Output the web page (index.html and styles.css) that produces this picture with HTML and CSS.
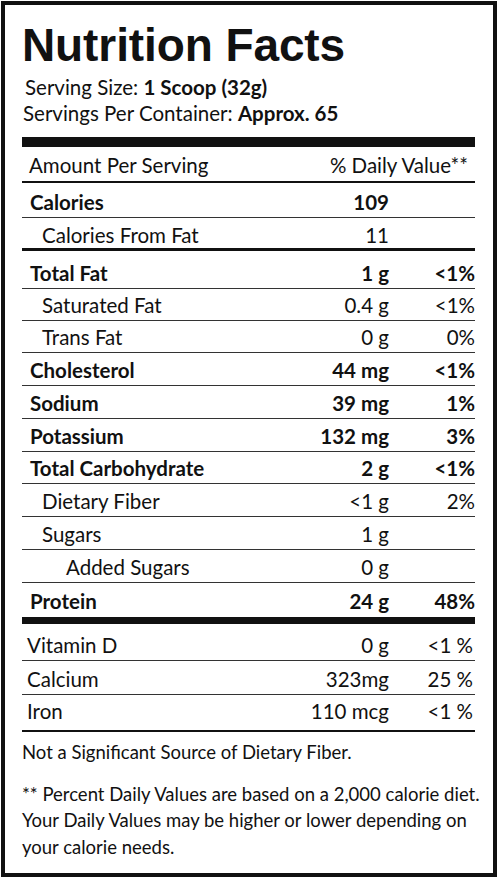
FILE: index.html
```html
<!DOCTYPE html>
<html lang="en">
<head>
    <meta charset="UTF-8">
    <meta name="viewport" content="width=device-width, initial-scale=1.0">
    <title>Nutrition Facts</title>
    <link rel="stylesheet" href="styles.css">
</head>
<body>
    <div class="label">
        <h1 class="title">Nutrition Facts</h1>
        <p class="serving">Serving Size: <b>1 Scoop (32g)</b></p>
        <p class="serving serving-2">Servings Per Container: <b>Approx. 65</b></p>

        <div class="bar"></div>

        <div class="row head">
            <span class="name">Amount Per Serving</span>
            <span class="dv">% Daily Value**</span>
        </div>
        <div class="row cal strong">
            <span class="name">Calories</span>
            <span class="amt">109</span>
            <span class="pct"></span>
        </div>
        <div class="row thick">
            <span class="name indent">Calories From Fat</span>
            <span class="amt">11</span>
            <span class="pct"></span>
        </div>
        <div class="row fat strong">
            <span class="name">Total Fat</span>
            <span class="amt">1 g</span>
            <span class="pct">&lt;1%</span>
        </div>
        <div class="row short">
            <span class="name indent">Saturated Fat</span>
            <span class="amt">0.4 g</span>
            <span class="pct">&lt;1%</span>
        </div>
        <div class="row short">
            <span class="name indent">Trans Fat</span>
            <span class="amt">0 g</span>
            <span class="pct">0%</span>
        </div>
        <div class="row strong">
            <span class="name">Cholesterol</span>
            <span class="amt">44 mg</span>
            <span class="pct">&lt;1%</span>
        </div>
        <div class="row strong">
            <span class="name">Sodium</span>
            <span class="amt">39 mg</span>
            <span class="pct">1%</span>
        </div>
        <div class="row strong">
            <span class="name">Potassium</span>
            <span class="amt">132 mg</span>
            <span class="pct">3%</span>
        </div>
        <div class="row short strong">
            <span class="name">Total Carbohydrate</span>
            <span class="amt">2 g</span>
            <span class="pct">&lt;1%</span>
        </div>
        <div class="row">
            <span class="name indent">Dietary Fiber</span>
            <span class="amt">&lt;1 g</span>
            <span class="pct">2%</span>
        </div>
        <div class="row">
            <span class="name indent">Sugars</span>
            <span class="amt">1 g</span>
            <span class="pct"></span>
        </div>
        <div class="row">
            <span class="name indent-2">Added Sugars</span>
            <span class="amt">0 g</span>
            <span class="pct"></span>
        </div>
        <div class="row last strong">
            <span class="name">Protein</span>
            <span class="amt">24 g</span>
            <span class="pct">48%</span>
        </div>

        <div class="bar bar-small"></div>

        <div class="row vit">
            <span class="name">Vitamin D</span>
            <span class="amt">0 g</span>
            <span class="pct">&lt;1 %</span>
        </div>
        <div class="row vit calcium">
            <span class="name">Calcium</span>
            <span class="amt">323mg</span>
            <span class="pct">25 %</span>
        </div>
        <div class="row vit iron">
            <span class="name">Iron</span>
            <span class="amt">110 mcg</span>
            <span class="pct">&lt;1 %</span>
        </div>

        <p class="note">Not a Significant Source of Dietary Fiber.</p>
        <p class="note note-2">** Percent Daily Values are based on a 2,000 calorie diet.<br>Your Daily Values may be higher or lower depending on<br>your calorie needs.</p>
    </div>
</body>
</html>
```

FILE: styles.css
```css
* {
    box-sizing: border-box;
    margin: 0;
    padding: 0;
}

body {
    font-family: Lato, 'Open Sans', sans-serif;
    font-size: 20.5px;
    color: #111;
    background-color: #fff;
}

.label {
    margin: 1px;
    width: 496px;
    height: 876px;
    border: 4px solid #111;
    padding: 17px 18px 0 17px;
}

.title {
    font-family: 'Liberation Sans', Arial, sans-serif;
    font-size: 46px;
    font-weight: 700;
    line-height: 46px;
    letter-spacing: -0.1px;
    margin-bottom: 6px;
}

.serving {
    line-height: 26px;
    padding-left: 3px;
}

.serving-2 {
    padding-left: 1px;
}

.serving b {
    font-weight: 700;
}

.bar {
    height: 10px;
    background-color: #111;
    margin-top: 11px;
}

.bar-small {
    height: 7px;
    margin-top: 0;
}

/* rows of the table */
.row {
    display: flex;
    align-items: flex-end;
    height: 33px;
    padding-bottom: 5px;
    line-height: 20px;
    border-bottom: 1px solid #333;
}

.row .name {
    flex: 1;
    padding-left: 8px;
}

.row .amt {
    text-align: right;
}

.row .pct {
    width: 86px;
    text-align: right;
}

.strong {
    font-weight: 700;
}

.indent {
    padding-left: 20px !important;
}

.indent-2 {
    padding-left: 44px !important;
}

.head {
    height: 36px;
    border-bottom: 2px solid #111;
    padding-bottom: 6px;
}

.head .name {
    padding-left: 7px;
}

.dv {
    padding-right: 7px;
}

.cal {
    height: 35px;
}

.thick {
    height: 33px;
    border-bottom: 3px solid #111;
    padding-bottom: 3px;
}

.fat {
    height: 38px;
}

.short {
    height: 32px;
}

.last {
    height: 34px;
    border-bottom: none;
    padding-bottom: 6px;
}

.vit {
    height: 37px;
}

.vit .name {
    padding-left: 5px;
}

.vit .pct {
    padding-right: 2px;
}

.calcium {
    height: 34px;
}

.iron {
    height: 37px;
    border-bottom: 2px solid #111;
    padding-bottom: 9px;
}

.note {
    font-size: 18.5px;
    line-height: 26.5px;
    white-space: nowrap;
    margin-top: 7px;
}

.note-2 {
    margin-top: 15px;
}
```
